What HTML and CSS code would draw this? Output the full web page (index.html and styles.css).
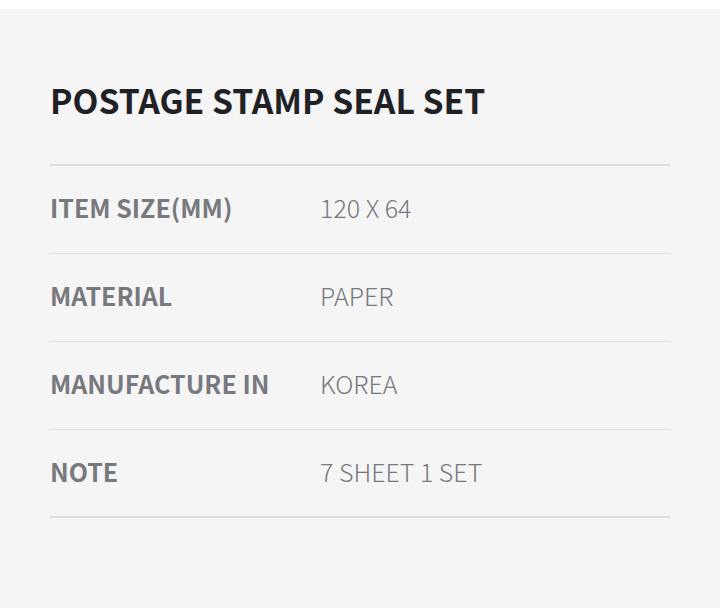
FILE: index.html
```html
<!DOCTYPE html>
<html lang="en">

<head>
    <meta charset="UTF-8">
    <meta name="viewport" content="width=device-width, initial-scale=1.0">
    <title>Postage Stamp Seal Set</title>
    <link rel="stylesheet" href="styles.css">
</head>

<body>
    <div class="top-bar"></div>
    <main class="spec">
        <h1 class="spec-title">POSTAGE STAMP SEAL SET</h1>
        <table class="spec-table">
            <tr>
                <th>ITEM SIZE(MM)</th>
                <td>120 X 64</td>
            </tr>
            <tr>
                <th>MATERIAL</th>
                <td>PAPER</td>
            </tr>
            <tr>
                <th>MANUFACTURE IN</th>
                <td>KOREA</td>
            </tr>
            <tr>
                <th>NOTE</th>
                <td>7 SHEET 1 SET</td>
            </tr>
        </table>
    </main>
</body>

</html>
```

FILE: styles.css
```css
* {
    margin: 0;
    padding: 0;
    box-sizing: border-box;
}

body {
    font-family: "Noto Sans CJK KR", "Noto Sans", sans-serif;
    background: #f5f5f5;
    height: 608px;
    overflow: hidden;
}

.top-bar {
    height: 9px;
    background: #ffffff;
}

.spec {
    padding: 0 50px;
}

.spec-title {
    font-size: 33.7px;
    font-weight: 700;
    color: #1f2125;
    line-height: 50px;
    padding-top: 66px;
    padding-bottom: 39px;
}

.spec-table {
    width: 100%;
    border-collapse: collapse;
    border-top: 2px solid #dddde2;
    border-bottom: 2px solid #dddde2;
}

.spec-table tr + tr {
    border-top: 1px solid #e0e0e2;
}

.spec-table th,
.spec-table td {
    height: 88px;
    padding-bottom: 4px;
    font-size: 25px;
    text-align: left;
    vertical-align: middle;
    color: #78797e;
}

.spec-table th {
    width: 270px;
    font-weight: 700;
}

.spec-table td {
    font-weight: 300;
}
```
